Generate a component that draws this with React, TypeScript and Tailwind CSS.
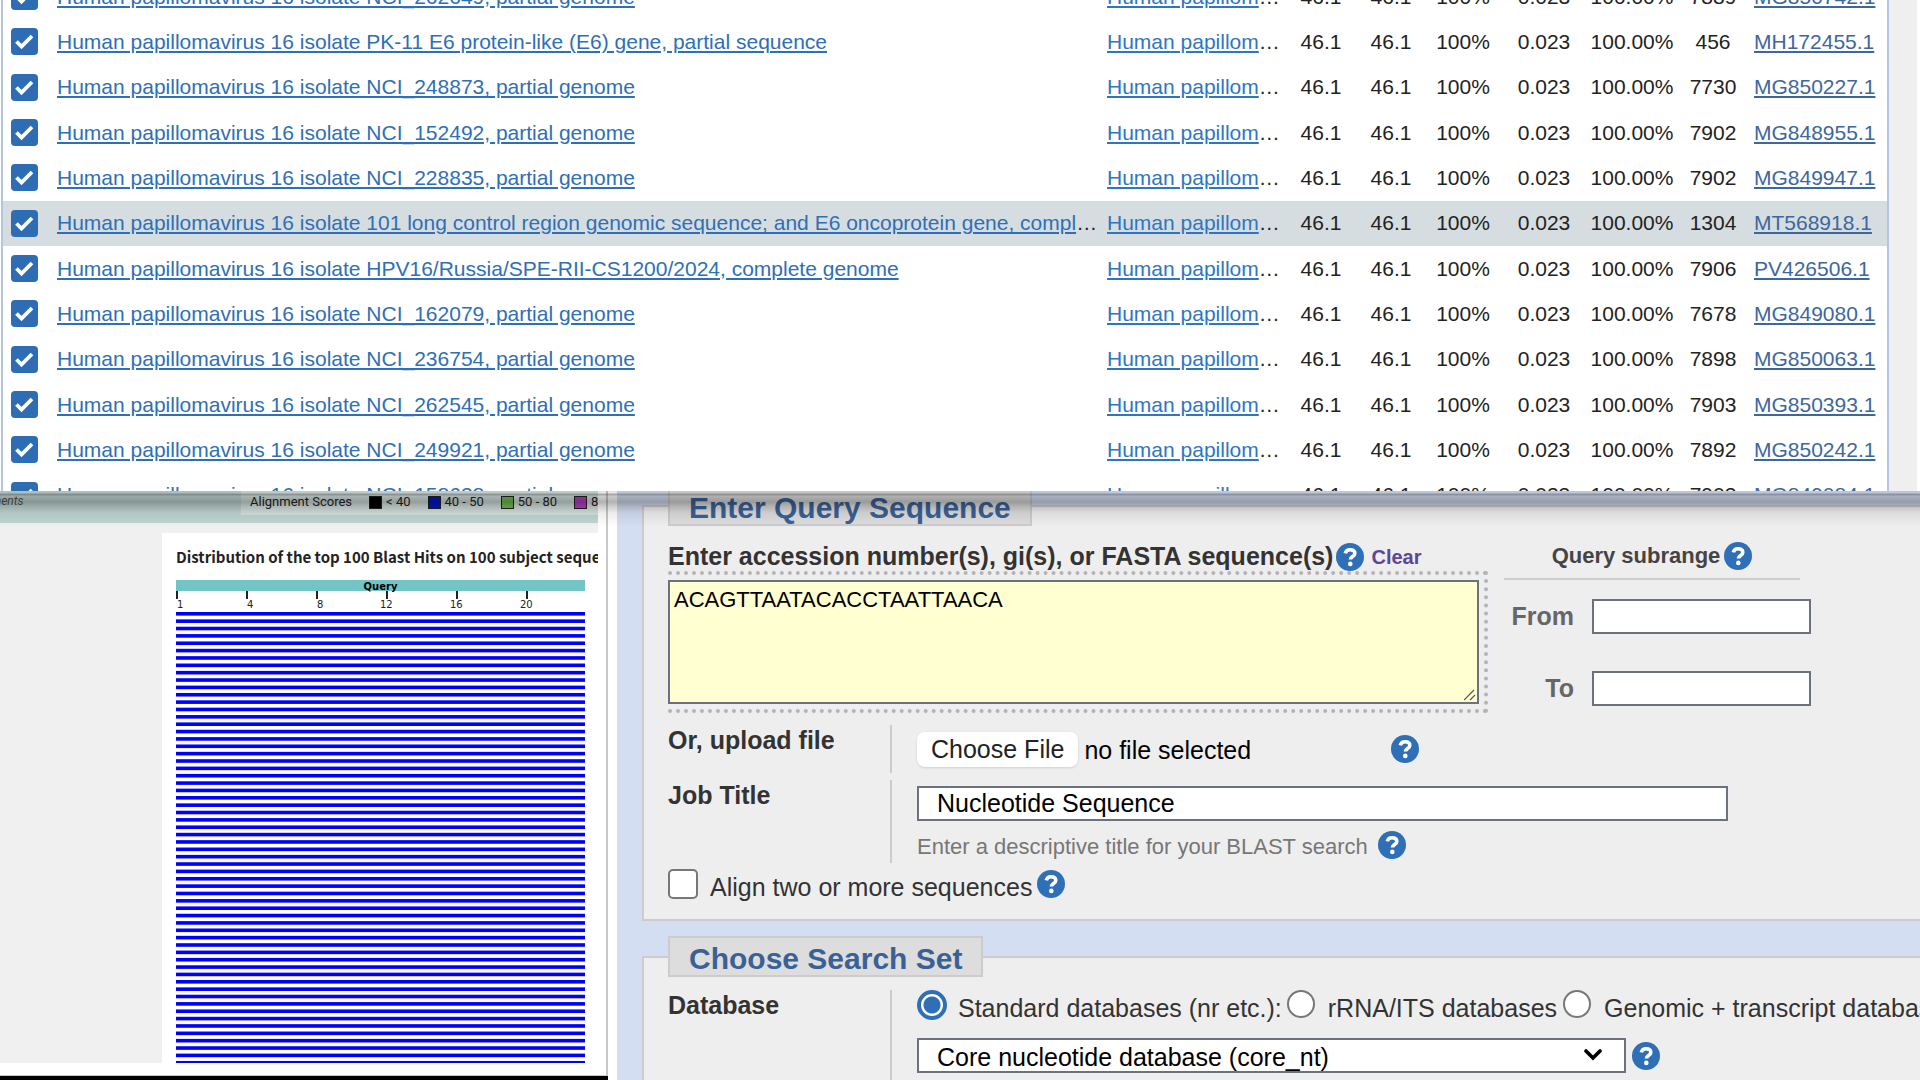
import React from 'react';

const hits = [
  ['Human papillomavirus 16 isolate NCI_262649, partial genome', '7889', 'MG850742.1'],
  ['Human papillomavirus 16 isolate PK-11 E6 protein-like (E6) gene, partial sequence', '456', 'MH172455.1'],
  ['Human papillomavirus 16 isolate NCI_248873, partial genome', '7730', 'MG850227.1'],
  ['Human papillomavirus 16 isolate NCI_152492, partial genome', '7902', 'MG848955.1'],
  ['Human papillomavirus 16 isolate NCI_228835, partial genome', '7902', 'MG849947.1'],
  ['Human papillomavirus 16 isolate 101 long control region genomic sequence; and E6 oncoprotein gene, complete cds', '1304', 'MT568918.1'],
  ['Human papillomavirus 16 isolate HPV16/Russia/SPE-RII-CS1200/2024, complete genome', '7906', 'PV426506.1'],
  ['Human papillomavirus 16 isolate NCI_162079, partial genome', '7678', 'MG849080.1'],
  ['Human papillomavirus 16 isolate NCI_236754, partial genome', '7898', 'MG850063.1'],
  ['Human papillomavirus 16 isolate NCI_262545, partial genome', '7903', 'MG850393.1'],
  ['Human papillomavirus 16 isolate NCI_249921, partial genome', '7892', 'MG850242.1'],
  ['Human papillomavirus 16 isolate NCI_158638, partial genome', '7903', 'MG849084.1'],
];

const scores = [
  { label: '< 40', swatch: 'bg-black' },
  { label: '40 - 50', swatch: 'bg-[#0018c8]' },
  { label: '50 - 80', swatch: 'bg-[#6fbf50]' },
  { label: '80 - 200', swatch: 'bg-[#b040c0]' },
];

const ticks = [1, 4, 8, 12, 16, 20];

function Help({ topic }: { topic: string }) {
  return (
    <button type="button" aria-label={`Help: ${topic}`} className="size-7 shrink-0">
      <svg viewBox="0 0 28 28" className="size-7">
        <circle cx="14" cy="14" r="14" fill="#2e6fb8" />
        <path d="M9.3 10.4C9.8 7.9 11.6 6.7 14.1 6.7c2.8 0 4.7 1.4 4.7 3.7 0 3.1-4.3 3.1-4.4 6.1" fill="none" stroke="#fff" strokeWidth="3.6" />
        <circle cx="14.3" cy="20.9" r="2.3" fill="#fff" />
      </svg>
    </button>
  );
}

function Hits() {
  return (
    <section className="flex h-[491px] shrink-0 overflow-hidden bg-white pl-px">
      <div className="min-w-0 flex-1 border-x-2 border-[#b4c5de]">
        <table className="-mt-[26px] h-[544px] w-full table-fixed border-collapse text-[21px] leading-6 text-[#222]">
          <colgroup>
            <col className="w-[54px]" />
            <col />
            <col className="w-[182px]" />
            <col className="w-[70px]" />
            <col className="w-[70px]" />
            <col className="w-[74px]" />
            <col className="w-[88px]" />
            <col className="w-[88px]" />
            <col className="w-[74px]" />
            <col className="w-[137px]" />
          </colgroup>
          <tbody>
            {hits.map(([name, length, accession], i) => (
              <tr key={accession} className={i === 5 ? 'bg-[#d6dde0]' : ''}>
                <td className="p-0 pl-2">
                  <span className="relative block size-[27px]">
                    <input type="checkbox" defaultChecked aria-label={`Select ${accession}`} className="block size-[27px] appearance-none rounded bg-[#2e6db4]" />
                    <svg viewBox="0 0 27 27" className="pointer-events-none absolute inset-0 size-[27px]">
                      <path d="M5.5 13.5l5 5L21 8" fill="none" stroke="#fff" strokeWidth="3.8" />
                    </svg>
                  </span>
                </td>
                <td className="truncate p-0"><a href="#hit" className="text-[#2e6fb8] underline">{name}</a></td>
                <td className="truncate p-0 pl-[3px]"><a href="#taxonomy" className="text-[#2e76c4] underline">Human papillom</a>…</td>
                <td className="p-0 text-center">46.1</td>
                <td className="p-0 text-center">46.1</td>
                <td className="p-0 text-center">100%</td>
                <td className="p-0 text-center">0.023</td>
                <td className="p-0 text-center">100.00%</td>
                <td className="p-0 text-center">{length}</td>
                <td className="p-0 pl-1"><a href="#accession" className="text-[#3c679f] underline">{accession}</a></td>
              </tr>
            ))}
          </tbody>
        </table>
      </div>
      <div className="mr-[3px] w-7 bg-[#efefef]" />
    </section>
  );
}

function Graphic() {
  return (
    <section className="flex w-[608px] shrink-0 flex-col bg-black">
      <div className="flex min-h-0 flex-1 flex-col border-r-2 border-b border-[#c8c8c8] bg-white pr-2 pb-3">
        <div className="flex h-8 shrink-0 items-start justify-between overflow-hidden bg-[#c0d6d3] text-[13px] leading-[15px]">
          <span className="-ml-[34px] pt-[3px] font-['Roboto'] text-[12px] italic text-[#555]">alignments</span>
          <div className="flex h-6 w-[357px] items-start gap-[17px] overflow-hidden bg-[#d5e2e0] pt-[3px] pl-[9px] font-['Roboto'] whitespace-nowrap text-[#222]">
            <span>Alignment Scores</span>
            {scores.map((s) => (
              <span key={s.label} className="flex items-center gap-1">
                <span className={`mt-[2px] size-[13px] border border-[#222] ${s.swatch}`} />
                {s.label}
              </span>
            ))}
          </div>
        </div>
        <div className="flex min-h-0 flex-1 bg-[#f0f0f0]">
          <div className="mt-[10px] ml-[162px] min-w-0 flex-1 overflow-hidden bg-white pl-[14px]">
            <h2 className="mt-3 font-['Noto_Sans_CJK_SC'] text-[15px] leading-6 font-bold whitespace-nowrap text-[#222]">
              Distribution of the top 100 Blast Hits on 100 subject sequences
            </h2>
            <div className="mt-[11px] mr-[13px]">
              <div className="h-[11px] bg-[#74c3c5] text-center font-['DejaVu_Sans'] text-[10px] leading-[13px] font-bold">Query</div>
              <div className="grid h-[21px] grid-cols-[repeat(5,70px)_1fr] font-['DejaVu_Sans'] text-[10px] leading-3 text-[#222]">
                {ticks.map((t) => (
                  <span key={t} className="flex flex-col items-start">
                    <span className="h-2 w-[2px] bg-[#222]" />
                    <span className={t > 9 ? '-ml-[6px]' : 'ml-px'}>{t}</span>
                  </span>
                ))}
              </div>
              <svg viewBox="0 0 409 453" preserveAspectRatio="none" className="block h-[453px] w-full">
                {Array.from({ length: 62 }, (_, i) => (
                  <rect key={i} x="0" y={i * 7.36} width="409" height="3.6" fill="#0000ff" />
                ))}
              </svg>
            </div>
          </div>
        </div>
      </div>
      <div className="h-1 shrink-0 bg-black" />
    </section>
  );
}

function Subrange() {
  return (
    <div className="w-[307px]">
      <div className="mr-[11px] flex h-[54px] items-center justify-center gap-1 border-b-2 border-[#ccc] pt-2 text-[22px] font-bold text-[#444]">
        Query subrange <Help topic="query subrange" />
      </div>
      <div className="mt-[19px] flex flex-col gap-[37px] text-[25px] font-bold text-[#666]">
        <label className="flex items-center justify-end gap-[18px] leading-[35px]">
          From <input type="text" className="h-[35px] w-[219px] border-2 border-[#6b717d] bg-white" />
        </label>
        <label className="flex items-center justify-end gap-[18px] leading-[35px]">
          To <input type="text" className="h-[35px] w-[219px] border-2 border-[#6b717d] bg-white" />
        </label>
      </div>
    </div>
  );
}

function QueryForm() {
  const legend = 'h-[41px] border-2 border-[#ccc] bg-[#ddd] px-[19px] text-[30px] leading-[41px] font-bold text-[#3a6196]';
  const fieldset = 'min-w-0 border-2 border-r-0 border-[#ccc] bg-[#eee] pl-6';
  return (
    <form className="-mt-[6px] ml-[9px] min-w-0 flex-1 bg-[#d4def2] pl-[25px] text-[25px] leading-[30px] text-[#333]">
      <fieldset className={`${fieldset} mb-[15px] pb-[17px]`}>
        <legend className={legend}>Enter Query Sequence</legend>
        <div className="flex gap-4">
          <div className="w-[820px]">
            <div className="flex h-[45px] items-end gap-[3px] font-bold">
              <label htmlFor="seq" className="whitespace-nowrap">Enter accession number(s), gi(s), or FASTA sequence(s)</label>
              <Help topic="query sequence" />
              <a href="#clear" className="pl-1 text-[20px]/7 text-[#5c4698]">Clear</a>
            </div>
            <div className="relative border-y-4 border-r-4 border-dotted border-[#b4b4b8] py-[5px] pr-[5px]">
              <textarea id="seq" defaultValue="ACAGTTAATACACCTAATTAACA" className="block h-[124px] w-full resize-none border-2 border-[#6b717d] bg-[#ffffd2] px-1 py-[5px] text-[22px] leading-[26px] text-black" />
              <svg viewBox="0 0 12 12" className="pointer-events-none absolute right-2 bottom-2 size-3">
                <path d="M0 11L10 1M6 11l5-5" stroke="#555" strokeWidth="1.2" />
              </svg>
            </div>
          </div>
          <Subrange />
        </div>
        <div className="mt-3 flex">
          <span className="w-[222px] font-bold">Or, upload file</span>
          <div className="flex h-12 items-center border-l-2 border-[#ccc] pl-[25px]">
            <button type="button" className="h-[35px] rounded-lg bg-white px-[14px] text-[#222] shadow">Choose File</button>
            <span className="ml-[6px] w-[307px] pt-[2px] text-black">no file selected</span>
            <Help topic="upload" />
          </div>
        </div>
        <div className="mt-[7px] flex">
          <label htmlFor="job" className="w-[222px] font-bold">Job Title</label>
          <div className="h-[83px] border-l-2 border-[#ccc] pt-[6px] pl-[25px]">
            <input id="job" type="text" defaultValue="Nucleotide Sequence" className="block h-[35px] w-[811px] border-2 border-[#6b717d] bg-white px-[18px] text-black" />
            <div className="mt-[7px] flex items-center gap-[10px] text-[22px] text-[#777]">
              <span className="pt-1">Enter a descriptive title for your BLAST search</span> <Help topic="job title" />
            </div>
          </div>
        </div>
        <div className="mt-[3px] flex items-center">
          <input id="align" type="checkbox" className="size-[30px] appearance-none rounded-[5px] border-2 border-[#777] bg-white" />
          <label htmlFor="align" className="mr-[5px] ml-3 pt-[6px]">Align two or more sequences</label>
          <Help topic="align" />
        </div>
      </fieldset>
      <fieldset className={fieldset}>
        <legend className={legend}>Choose Search Set</legend>
        <div className="mt-[13px] flex">
          <span className="w-[222px] shrink-0 font-bold">Database</span>
          <div className="h-[200px] min-w-0 flex-1 overflow-hidden border-l-2 border-[#ccc] pl-[25px]">
            <div className="flex items-start whitespace-nowrap">
              <input id="std" name="db" type="radio" defaultChecked className="size-[30px] shrink-0 appearance-none rounded-full border-4 border-[#2e6fb8] bg-[radial-gradient(circle,#2e6fb8_8px,#fff_9px)]" />
              <label htmlFor="std" className="ml-[11px] pt-[3px]">Standard databases (nr etc.):</label>
              <input id="rrna" name="db" type="radio" className="ml-[5px] size-7 shrink-0 appearance-none rounded-full border-2 border-[#777] bg-white" />
              <label htmlFor="rrna" className="ml-[13px] pt-[3px]">rRNA/ITS databases</label>
              <input id="gen" name="db" type="radio" className="ml-[6px] size-7 shrink-0 appearance-none rounded-full border-2 border-[#777] bg-white" />
              <label htmlFor="gen" className="ml-[13px] pt-[3px]">Genomic + transcript databases</label>
            </div>
            <div className="mt-[15px] flex items-center gap-[6px]">
              <span className="relative w-[709px]">
                <select aria-label="Database" className="block h-[35px] w-full appearance-none border-2 border-[#6b717d] bg-white px-[18px] pt-[2px] text-[25px] leading-[30px] text-black">
                  <option>Core nucleotide database (core_nt)</option>
                </select>
                <svg viewBox="0 0 18 12" className="pointer-events-none absolute top-[11px] right-6 h-3 w-[18px]">
                  <path d="M2 2l7 7 7-7" fill="none" stroke="#000" strokeWidth="3.6" strokeLinecap="round" />
                </svg>
              </span>
              <Help topic="database" />
            </div>
          </div>
        </div>
      </fieldset>
    </form>
  );
}

export default function App() {
  return (
    <div className="flex h-screen flex-col overflow-hidden bg-white font-['Liberation_Sans',sans-serif]">
      <Hits />
      <div className="relative flex min-h-0 flex-1 overflow-hidden">
        <Graphic />
        <QueryForm />
        <div className="pointer-events-none absolute inset-x-0 top-0 h-9 bg-[linear-gradient(to_bottom,rgba(0,0,0,.1)_0px,rgba(0,0,0,.1)_2px,rgba(0,0,0,.34)_3px,rgba(0,0,0,.34)_4px,rgba(0,0,0,.2)_5px,rgba(0,0,0,.3)_11px,rgba(0,0,0,.2)_15px,rgba(0,0,0,.07)_22px,transparent_36px)]" />
      </div>
    </div>
  );
}
